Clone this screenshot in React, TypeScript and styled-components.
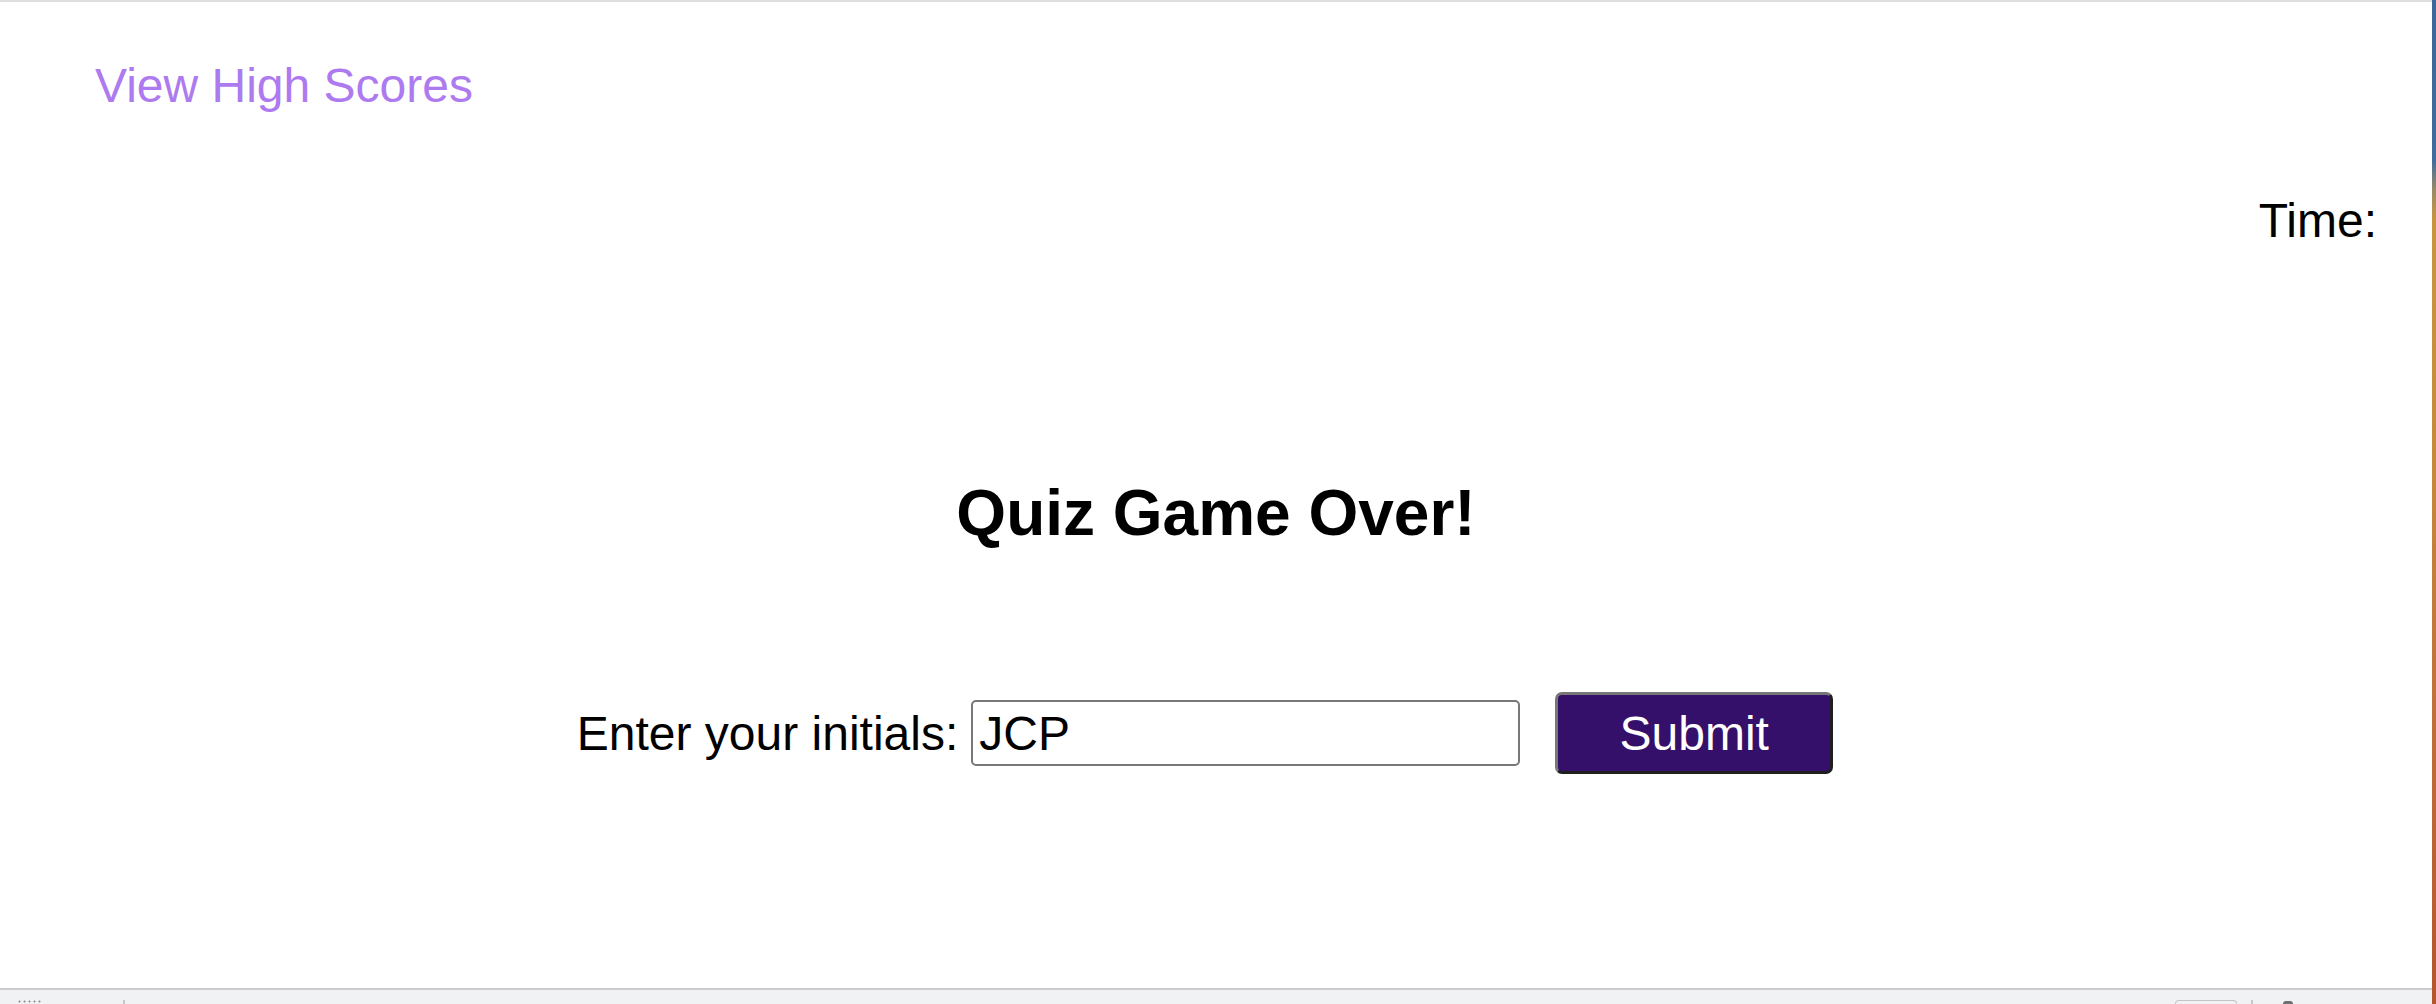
import React from "react";
import styled, { createGlobalStyle } from "styled-components";

const GlobalStyle = createGlobalStyle`
  html, body {
    margin: 0;
    padding: 0;
    background: #ffffff;
    overflow: hidden;
  }
  body {
    font-family: "Liberation Sans", Arial, Helvetica, sans-serif;
  }
`;

const Frame = styled.div`
  display: flex;
  width: 2436px;
  height: 1004px;
`;

const BrowserWindow = styled.div`
  flex: 1;
  display: flex;
  flex-direction: column;
  background: #ffffff;
  border-top: 2px solid #dedede;
  min-width: 0;
`;

const DesktopEdge = styled.div`
  width: 4px;
  background: linear-gradient(
    to bottom,
    #3b679a 0px,
    #3f6c9c 160px,
    #9a8a66 190px,
    #c8953f 220px,
    #c68a3a 450px,
    #c0703a 700px,
    #b5552c 1004px
  );
`;

const Page = styled.main`
  flex: 1;
  display: flex;
  flex-direction: column;
  font-family: "Liberation Sans", Arial, Helvetica, sans-serif;
  color: #000000;
`;

const Nav = styled.nav`
  padding: 56px 0 0 95px;
`;

const HighScoresLink = styled.a`
  font-size: 48px;
  line-height: 55px;
  color: #ad7af0;
  text-decoration: none;
  cursor: pointer;
`;

const Timer = styled.div`
  margin-top: 80px;
  padding-right: 55px;
  text-align: right;
  font-size: 48px;
  line-height: 55px;
`;

const Heading = styled.h1`
  margin: 228px 0 0;
  text-align: center;
  font-size: 64px;
  line-height: 74px;
  font-weight: 700;
`;

const Form = styled.form`
  margin-top: 142px;
  display: flex;
  justify-content: center;
  align-items: center;
  padding-right: 22px;
`;

const Label = styled.label`
  font-size: 48px;
  line-height: 55px;
  margin-right: 13px;
`;

const InitialsInput = styled.input`
  box-sizing: border-box;
  width: 549px;
  height: 66px;
  margin: 0 35px 0 0;
  padding: 0 6px;
  border: 2px solid #787878;
  border-radius: 5px;
  font-family: "Liberation Sans", Arial, Helvetica, sans-serif;
  font-size: 48px;
  line-height: 55px;
  color: #000000;
  background: #ffffff;
  outline: none;
`;

const SubmitButton = styled.button`
  box-sizing: border-box;
  width: 278px;
  height: 82px;
  padding: 0;
  border: 3px solid;
  border-color: #777777 #1f1f1f #1f1f1f #777777;
  border-radius: 7px;
  background: #35106a;
  color: #ffffff;
  font-family: "Liberation Sans", Arial, Helvetica, sans-serif;
  font-size: 48px;
  line-height: 55px;
  cursor: pointer;
`;

const Spacer = styled.div`
  flex: 1;
`;

const StatusBar = styled.footer`
  height: 14px;
  border-top: 2px solid #cbcbcd;
  background: #f1f2f4;
  display: flex;
  align-items: flex-end;
  overflow: hidden;
`;

const Grip = styled.div`
  margin-left: 17px;
  width: 26px;
  height: 3px;
  margin-bottom: 1px;
  background-image: radial-gradient(circle, #8a8a8a 0.9px, transparent 1.1px);
  background-size: 5px 3px;
`;

const Divider = styled.div<{ $ml: number }>`
  margin-left: ${(p) => p.$ml}px;
  width: 2px;
  height: 4px;
  background: #c8c8ca;
`;

const StatusPill = styled.div`
  margin-left: auto;
  width: 60px;
  height: 3px;
  border: 1px solid #c4c4c6;
  border-bottom: none;
  border-radius: 4px 4px 0 0;
`;

const StatusIcon = styled.div`
  margin-left: 30px;
  margin-right: 139px;
  width: 10px;
  height: 3px;
  border-radius: 5px 5px 0 0;
  background: #6e6e70;
`;

export default function App() {
  return (
    <>
      <GlobalStyle />
      <Frame>
        <BrowserWindow>
          <Page>
            <Nav>
              <HighScoresLink href="#">View High Scores</HighScoresLink>
            </Nav>
            <Timer>Time:</Timer>
            <Heading>Quiz Game Over!</Heading>
            <Form onSubmit={(e) => e.preventDefault()}>
              <Label htmlFor="initials">Enter your initials:</Label>
              <InitialsInput id="initials" type="text" defaultValue="JCP" />
              <SubmitButton type="submit">Submit</SubmitButton>
            </Form>
            <Spacer />
          </Page>
          <StatusBar>
            <Grip />
            <Divider $ml={80} />
            <StatusPill />
            <Divider $ml={14} />
            <StatusIcon />
          </StatusBar>
        </BrowserWindow>
        <DesktopEdge />
      </Frame>
    </>
  );
}
